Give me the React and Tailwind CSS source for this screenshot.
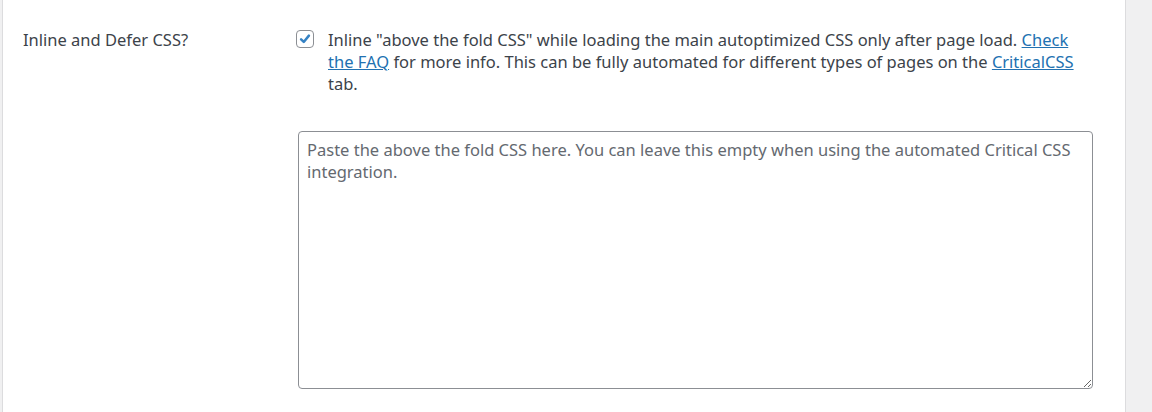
const App = () => {
    return (
        <div className="flex h-[412px] w-[1152px] overflow-hidden bg-[#f0f0f1]" style={{ fontFamily: '"Noto Sans", "Open Sans", sans-serif' }}>
            <div className="ml-[2px] flex w-[1124px] border-x border-[#dcdcde] bg-white pl-[20px] pt-[29px] text-[16.5px] leading-[22px] text-[#3c434a]">
                <div className="w-[275px] shrink-0">Inline and Defer CSS?</div>

                <div className="w-[795px]">
                    <div className="flex">
                        <span className="-ml-[2px] mt-[1px] flex h-[18px] w-[18px] shrink-0 items-center justify-center rounded-[4px] border border-[#8c8f94] bg-white">
                            <svg viewBox="0 0 18 18" className="h-[18px] w-[18px]">
                                <path d="M4.6 9.4 L7.6 12.3 L13.4 5.2" fill="none" stroke="#3582c4" strokeWidth="2.8" strokeLinecap="round" strokeLinejoin="round" />
                            </svg>
                        </span>
                        <p className="ml-[14px] pr-[16px]">
                            Inline "above the fold CSS" while loading the main autoptimized CSS only after page load.{' '}
                            <a href="#" className="text-[#2271b1] underline">Check the FAQ</a> for more info. This can be fully automated for different types of pages on the{' '}
                            <a href="#" className="text-[#2271b1] underline">CriticalCSS</a> tab.
                        </p>
                    </div>

                    <textarea
                        className="mt-[36px] block h-[258px] w-[795px] resize-y rounded-[4px] border border-[#8c8f94] px-[8px] py-[7px] text-[16.5px] leading-[22px] text-[#2c3338] placeholder:text-[#646970] outline-none"
                        placeholder="Paste the above the fold CSS here. You can leave this empty when using the automated Critical CSS integration."
                    />
                </div>
            </div>
        </div>
    );
};

export default App;
